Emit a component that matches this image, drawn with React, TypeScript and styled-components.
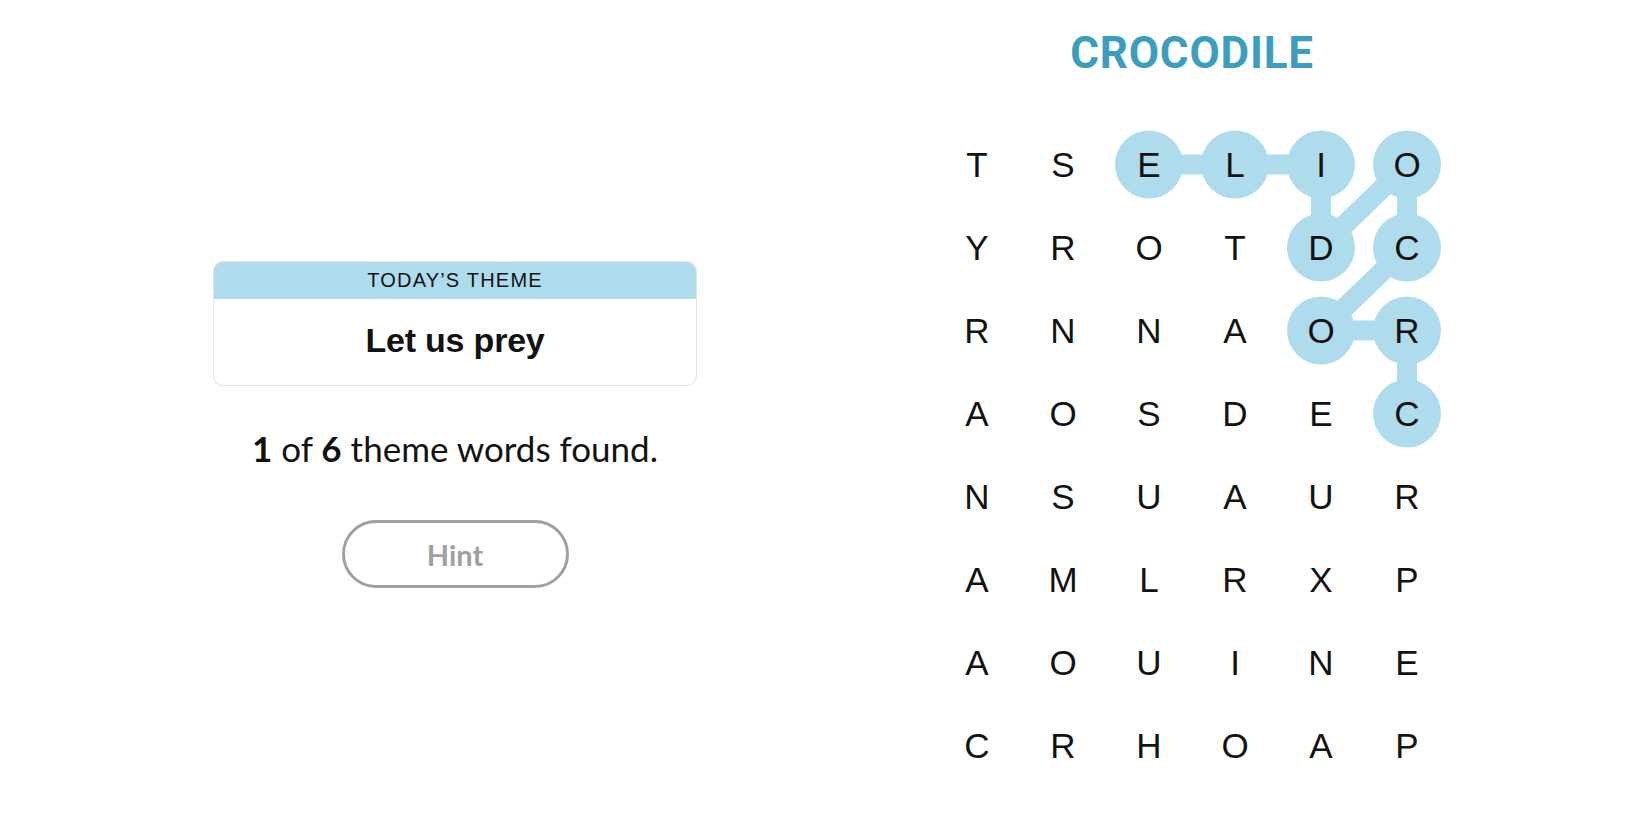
import styled, { createGlobalStyle } from 'styled-components';

const GlobalStyle = createGlobalStyle`
  body {
    margin: 0;
    background: #ffffff;
    font-family: 'Liberation Sans', Arial, sans-serif;
    color: #121212;
  }
`;

const LETTERS = [
  'TSELIO',
  'YROTDC',
  'RNNAOR',
  'AOSDEC',
  'NSUAUR',
  'AMLRXP',
  'AOUINE',
  'CRHOAP',
];

// found word, as [row, col], in the order it was traced
const FOUND: [number, number][] = [
  [3, 5],
  [2, 5],
  [2, 4],
  [1, 5],
  [0, 5],
  [1, 4],
  [0, 4],
  [0, 3],
  [0, 2],
];

const CELL_W = 86;
const CELL_H = 83;
const COLS = 6;
const ROWS = 8;

const cx = (c: number) => c * CELL_W + CELL_W / 2;
const cy = (r: number) => r * CELL_H + CELL_H / 2;

export default function App() {
  return (
    <>
      <GlobalStyle />
      <Page>
        <Side>
          <ThemeCard>
            <ThemeHeader>TODAY’S THEME</ThemeHeader>
            <ThemeBody>Let us prey</ThemeBody>
          </ThemeCard>
          <Progress>
            <b>1</b> of <b>6</b> theme words found.
          </Progress>
          <HintButton>Hint</HintButton>
        </Side>

        <PlayArea>
          <Word>CROCODILE</Word>
          <Board>
            <Trail width={COLS * CELL_W} height={ROWS * CELL_H}>
              <polyline
                points={FOUND.map(([r, c]) => `${cx(c)},${cy(r)}`).join(' ')}
                fill="none"
                stroke="#aedcec"
                strokeWidth={20}
                strokeLinejoin="round"
              />
              {FOUND.map(([r, c]) => (
                <circle key={`${r}-${c}`} cx={cx(c)} cy={cy(r)} r={34} fill="#aedcec" />
              ))}
            </Trail>
            {LETTERS.map((row, r) =>
              row.split('').map((ch, c) => <Cell key={`${r}-${c}`}>{ch}</Cell>)
            )}
          </Board>
        </PlayArea>
      </Page>
    </>
  );
}

const Page = styled.div`
  display: flex;
  width: 1650px;
  height: 825px;
`;

const Side = styled.div`
  width: 910px;
  display: flex;
  flex-direction: column;
  align-items: center;
  padding-top: 261px;
  box-sizing: border-box;
`;

const ThemeCard = styled.div`
  width: 484px;
  border: 1px solid #e2e2e2;
  border-radius: 10px;
  overflow: hidden;
  box-sizing: border-box;
`;

const ThemeHeader = styled.div`
  height: 37px;
  background: #aedcec;
  display: flex;
  align-items: center;
  justify-content: center;
  font-family: 'Liberation Sans', Arial, sans-serif;
  font-size: 20px;
  letter-spacing: 1.2px;
  color: #121212;
`;

const ThemeBody = styled.div`
  height: 86px;
  display: flex;
  align-items: center;
  justify-content: center;
  padding-bottom: 4px;
  box-sizing: border-box;
  font-family: 'Liberation Sans', Arial, sans-serif;
  font-weight: 700;
  font-size: 34px;
  letter-spacing: -0.2px;
  color: #121212;
`;

const Progress = styled.p`
  margin: 41px 0 0;
  font-family: Lato, 'Open Sans', sans-serif;
  font-size: 35px;
  color: #121212;

  b {
    font-weight: 700;
  }
`;

const HintButton = styled.button`
  margin-top: 51px;
  width: 227px;
  height: 68px;
  border: 3px solid #a0a0a0;
  border-radius: 34px;
  background: #ffffff;
  font-family: Lato, 'Open Sans', sans-serif;
  font-weight: 700;
  font-size: 29px;
  color: #a0a0a0;
  cursor: pointer;
`;

const PlayArea = styled.div`
  width: 564px;
  display: flex;
  flex-direction: column;
  align-items: center;
  padding-top: 28px;
  box-sizing: border-box;
`;

const Word = styled.h1`
  margin: 0;
  height: 50px;
  line-height: 50px;
  font-family: Roboto, 'Liberation Sans', sans-serif;
  font-weight: 700;
  font-size: 44px;
  letter-spacing: 0.8px;
  color: #3c9ebe;
`;

const Board = styled.div`
  position: relative;
  margin-top: 45px;
  display: grid;
  grid-template-columns: repeat(${COLS}, ${CELL_W}px);
  grid-template-rows: repeat(${ROWS}, ${CELL_H}px);
`;

const Trail = styled.svg`
  position: absolute;
  left: 0;
  top: 0;
  pointer-events: none;
`;

const Cell = styled.div`
  position: relative;
  display: flex;
  align-items: center;
  justify-content: center;
  font-family: 'Liberation Sans', Arial, sans-serif;
  font-size: 35px;
  color: #121212;
`;
